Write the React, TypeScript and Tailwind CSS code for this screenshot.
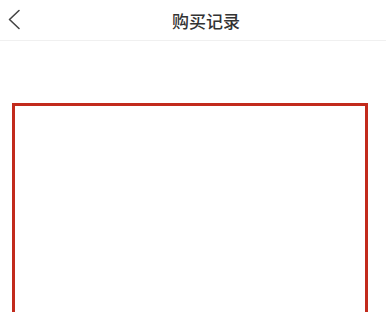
import React from "react";

export default function App() {
  return (
    <div
      className="flex h-[312px] w-[386px] flex-col overflow-hidden bg-white"
      style={{ fontFamily: '"Noto Sans CJK SC", "Noto Sans", sans-serif' }}
    >
      <header className="relative flex h-[41px] shrink-0 items-center justify-center border-b border-[#f0f0f0]">
        <button className="absolute left-[7px] top-[9px] flex h-[21px] w-[14px] items-center justify-center">
          <svg width="14" height="21" viewBox="0 0 14 21" fill="none">
            <path d="M12 1.5 2.5 10.5 12 19.5" stroke="#444" strokeWidth="1.6" strokeLinecap="round" strokeLinejoin="round" />
          </svg>
        </button>
        <h1 className="ml-[26px] text-[17px] font-medium leading-none text-[#333]">购买记录</h1>
      </header>
      <main className="flex-1 px-3 pt-[62px]">
        <div className="h-[260px] w-[356px] border-[3px] border-[#c22a1c]" />
      </main>
    </div>
  );
}
